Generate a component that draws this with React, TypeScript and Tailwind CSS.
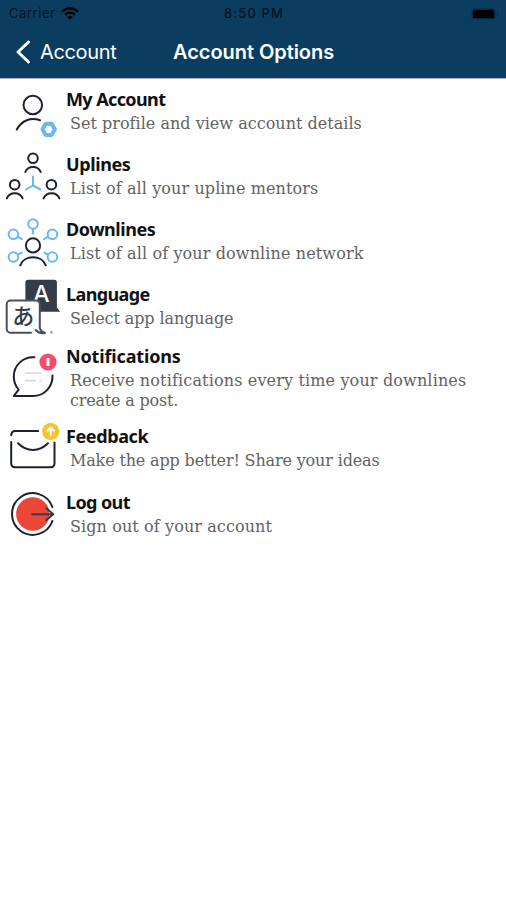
import type { ReactNode } from 'react'

interface Option {
  title: string
  lines: string[]
  icon: ReactNode
  height: string
  titleClass: string
  lineClass: string
}

const DARK = '#1c2233'
const BLUE = '#68b9f2'

function Icon({ children }: { children: ReactNode }) {
  return (
    <svg
      viewBox="0 0 66 65"
      className="h-[65px] w-[66px] shrink-0"
      fill="none"
      stroke={DARK}
      strokeWidth="2"
      strokeLinecap="round"
      strokeLinejoin="round"
    >
      {children}
    </svg>
  )
}

const AccountIcon = (
  <Icon>
    <circle cx="32.8" cy="22" r="9.3" />
    <path d="M16.8 46.5C21.5 37.5 31 33.8 40 37.3" />
    <path d="M45.6 40.7h6.2l3.1 5.6-3.1 5.6h-6.2l-3.1-5.6z" stroke={BLUE} strokeWidth="4" />
  </Icon>
)

const UplinesIcon = (
  <Icon>
    <circle cx="33" cy="10.3" r="4.8" />
    <path d="M25.3 24c2.6-6.6 12.8-6.6 15.4 0" />
    <circle cx="14.7" cy="36.7" r="4.8" />
    <path d="M6.8 50.4c2.8-6.9 13.1-6.9 15.8 0" />
    <circle cx="51.4" cy="36.7" r="4.8" />
    <path d="M43.6 50.4c2.8-6.9 13.1-6.9 15.8 0" />
    <path d="M33 28.5v9M33 37.5l-7 4M33 37.5l7.5 4" stroke={BLUE} />
  </Icon>
)

const DownlinesIcon = (
  <Icon>
    <g stroke={BLUE}>
      <circle cx="33" cy="11" r="4.8" />
      <path d="M33 16v4.5" />
      <circle cx="13.4" cy="21.3" r="4.8" />
      <path d="M17.8 23.8l4 2.2" />
      <circle cx="52.4" cy="21.3" r="4.8" />
      <path d="M48 23.8l-4 2.4" />
      <circle cx="13.4" cy="44" r="4.8" />
      <path d="M17.8 41.6l4-2" />
      <circle cx="52.4" cy="44" r="4.8" />
      <path d="M48 41.6l-3.5-2" />
    </g>
    <circle cx="33" cy="32.4" r="7.1" />
    <path d="M20.2 52.3c3.8-10.6 21.8-10.6 25.6 0" />
  </Icon>
)

const LanguageIcon = (
  <Icon>
    <path
      d="M28 1.7h26.3a2.6 2.6 0 0 1 2.6 2.6V29.5l3.2 4.3H28a2.6 2.6 0 0 1-2.6-2.6V4.3A2.6 2.6 0 0 1 28 1.7z"
      fill="#343b49"
      stroke="none"
    />
    <text x="41.3" y="23.9" textAnchor="middle" fontSize="23.5" fontWeight="500" fill="#fff" stroke="none" className="font-['Inter',sans-serif]">
      A
    </text>
    <path
      d="M31 54.7H10.3a3.6 3.6 0 0 1-3.6-3.6V26.2a3.6 3.6 0 0 1 3.6-3.6h25.9a3.6 3.6 0 0 1 3.6 3.6v23.5c.6 2.8 2.6 4.4 5.2 5.3-4 .6-7-.3-9.3-3"
      fill="#fff"
      stroke="#4a505f"
    />
    <text x="23.2" y="46.4" textAnchor="middle" fontSize="22" fontWeight="500" fill="#343b49" stroke="none" className="font-['Noto_Sans_CJK_JP',sans-serif]">
      あ
    </text>
    <circle cx="51.5" cy="54.4" r="1.3" fill="#9a9da5" stroke="none" />
  </Icon>
)

const NotificationsIcon = (
  <Icon>
    <path d="M34.4 17.3C22.4 16.6 13.8 25.8 13.8 36.4c0 5.3 1.7 9.6 4.9 13.2L13.8 56H33c11.7 0 19.8-9.6 19.500-20.5" />
    <path d="M25.3 33H41M25.3 40.6h10M40 40.6h.8" stroke="#d5d8de" strokeWidth="1.6" />
    <circle cx="48" cy="22" r="8.6" fill="#f64a6e" stroke="none" />
    <path d="M48 18v8" stroke="#fff" strokeWidth="3" strokeLinecap="butt" />
  </Icon>
)

const FeedbackIcon = (
  <Icon>
    <path d="M11.2 15.3c.2-3 1.5-4.3 4.2-4.3H38.2" />
    <path d="M11.2 22v21.3c0 2.7 1.3 4 4 4h35.3c2.7 0 4-1.3 4-4V22.5" />
    <path d="M18 23.3c8.7 8.8 21.3 8.8 30 0" />
    <circle cx="50.7" cy="11.3" r="8.6" fill="#fac22b" stroke="none" />
    <path d="M50.7 15.3V8M47.4 10.8L50.7 7.5l3.3 3.3" stroke="#fff" />
  </Icon>
)

const LogoutIcon = (
  <Icon>
    <path d="M52.4 21A20.8 20.8 0 1 0 52.4 35" />
    <circle cx="32.8" cy="28" r="16.7" fill="#ea4738" stroke="none" />
    <path d="M32.3 28.2H53M46.3 22.3l7 5.9-7 5.9" stroke="#343b49" />
  </Icon>
)

const options: Option[] = [
  {
    title: 'My Account',
    lines: ['Set profile and view account details'],
    icon: AccountIcon,
    height: 'h-[65px]',
    titleClass: 'tracking-[-0.6px]',
    lineClass: 'tracking-[0.02px]',
  },
  {
    title: 'Uplines',
    lines: ['List of all your upline mentors'],
    icon: UplinesIcon,
    height: 'h-[65px]',
    titleClass: 'tracking-[-0.4px]',
    lineClass: 'tracking-[0.1px]',
  },
  {
    title: 'Downlines',
    lines: ['List of all of your downline network'],
    icon: DownlinesIcon,
    height: 'h-[65px]',
    titleClass: 'tracking-[-0.45px]',
    lineClass: 'tracking-[0.12px]',
  },
  {
    title: 'Language',
    lines: ['Select app language'],
    icon: LanguageIcon,
    height: 'h-[62px]',
    titleClass: 'tracking-[-0.6px]',
    lineClass: 'tracking-[-0.1px]',
  },
  {
    title: 'Notifications',
    lines: ['Receive notifications every time your downlines', 'create a post.'],
    icon: NotificationsIcon,
    height: 'h-[80px]',
    titleClass: 'tracking-[-0.15px]',
    lineClass: 'tracking-[0.15px] last:tracking-[-0.2px]',
  },
  {
    title: 'Feedback',
    lines: ['Make the app better! Share your ideas'],
    icon: FeedbackIcon,
    height: 'h-[66px]',
    titleClass: 'tracking-[-0.4px]',
    lineClass: 'tracking-[-0.15px]',
  },
  {
    title: 'Log out',
    lines: ['Sign out of your account'],
    icon: LogoutIcon,
    height: 'h-[65px]',
    titleClass: 'tracking-[-0.6px]',
    lineClass: 'tracking-[0.1px]',
  },
]

function StatusBar() {
  return (
    <div className="grid h-[27px] grid-cols-3 items-center pr-[7px] pl-[9px] text-[13px] text-[#04131f]">
      <div className="flex items-center gap-1.5">
        <span className="tracking-[0.55px]">Carrier</span>
        <svg viewBox="0 0 18 13" className="h-[13px] w-[18px]" fill="none" stroke="#000" strokeWidth="2.4">
          <path d="M1 4.6c4.6-4.3 11.4-4.3 16 0" />
          <path d="M4 7.7c2.9-2.7 7.1-2.7 10 0" />
          <path d="M9 12.7L6.2 9.9c1.7-1.5 3.9-1.5 5.6 0z" fill="#000" stroke="none" />
        </svg>
      </div>
      <span className="text-center font-medium tracking-[1.1px]">8:50 PM</span>
      <svg viewBox="0 0 28 12" className="h-3 w-7 justify-self-end">
        <rect x="0.5" y="0.5" width="24" height="11" rx="3" fill="#062a45" />
        <rect x="2" y="2" width="21" height="8" rx="1.5" fill="#000" />
        <path d="M26 4v4c1.6-.8 1.6-3.2 0-4z" fill="#062a45" />
      </svg>
    </div>
  )
}

export default function App() {
  return (
    <div className="h-[900px] w-[506px] overflow-hidden bg-white">
      <header className="h-[79px] border-b border-[#a9b4c4] bg-[#0b3d61] font-['Inter',sans-serif]">
        <StatusBar />
        <div className="flex h-[49px] items-center pl-[15px] text-white">
          <svg viewBox="0 0 16 24" className="h-6 w-4 shrink-0" fill="none" stroke="#fff" strokeWidth="3" strokeLinecap="round" strokeLinejoin="round">
            <path d="M13.5 2L3 12l10.5 10" />
          </svg>
          <span className="ml-[9px] w-[133px] text-[20px] tracking-[-0.35px]">Account</span>
          <h1 className="text-[20px] font-semibold tracking-[-0.05px]">Account Options</h1>
        </div>
      </header>

      <ul className="pt-1">
        {options.map(option => (
          <li key={option.title} className={`flex ${option.height}`}>
            {option.icon}
            <div className="pt-1.5">
              <h2 className={`font-['Noto_Sans',sans-serif] text-[18px] leading-5 font-bold whitespace-nowrap text-[#111] ${option.titleClass}`}>
                {option.title}
              </h2>
              <div className="mt-[5px] pl-1 font-['DejaVu_Serif',serif] text-[16px] leading-5 whitespace-nowrap text-[#626262]">
                {option.lines.map(line => (
                  <p key={line} className={option.lineClass}>
                    {line}
                  </p>
                ))}
              </div>
            </div>
          </li>
        ))}
      </ul>
    </div>
  )
}
